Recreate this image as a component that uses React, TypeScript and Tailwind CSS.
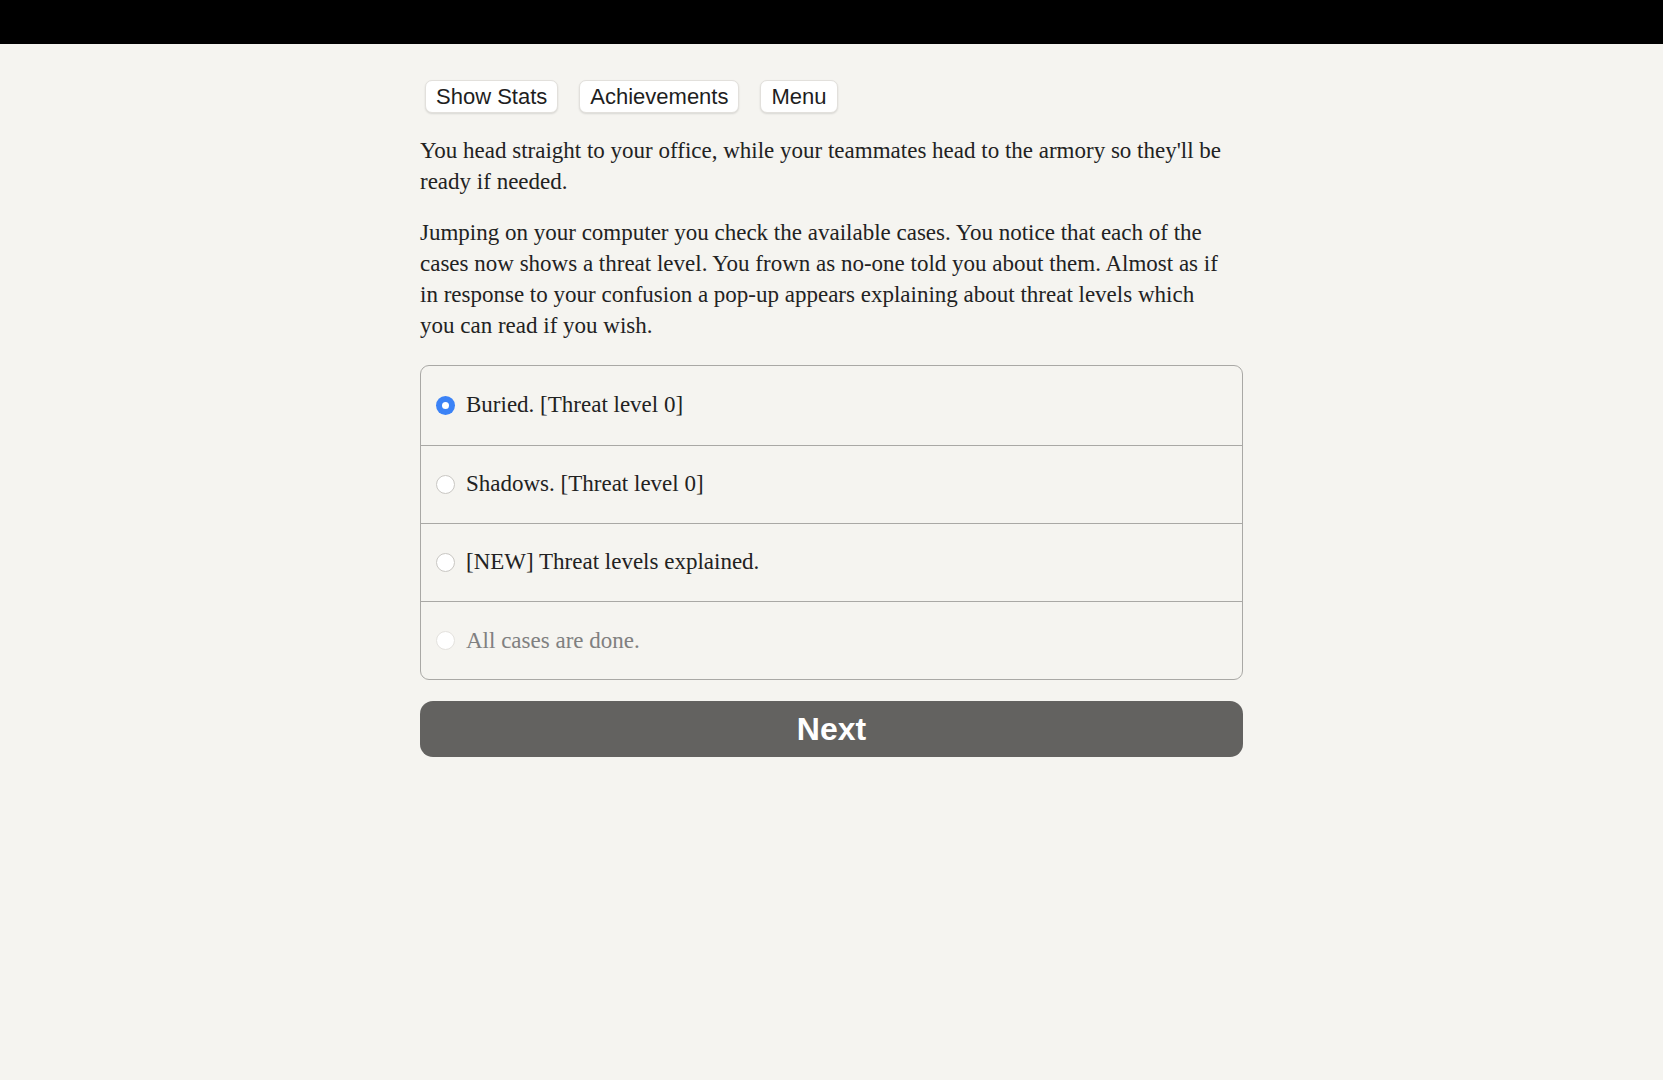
import { useState } from 'react';

const options = [
  { id: 'buried', label: 'Buried. [Threat level 0]', disabled: false },
  { id: 'shadows', label: 'Shadows. [Threat level 0]', disabled: false },
  { id: 'threat', label: '[NEW] Threat levels explained.', disabled: false },
  { id: 'done', label: 'All cases are done.', disabled: true },
];

function Radio({ checked, disabled }: { checked: boolean; disabled: boolean }) {
  if (checked) {
    return (
      <span className="w-[19px] h-[19px] rounded-full bg-[#3b82f6] flex items-center justify-center shrink-0">
        <span className="w-[7px] h-[7px] rounded-full bg-white" />
      </span>
    );
  }
  return (
    <span
      className={`w-[19px] h-[19px] rounded-full bg-white border shrink-0 ${
        disabled ? 'border-[#e4e2de] bg-[#f7f6f3]' : 'border-[#c9c7c3]'
      }`}
    />
  );
}

export default function App() {
  const [choice, setChoice] = useState('buried');

  return (
    <div className="min-h-[1080px] bg-[#f5f4f0] font-['Liberation_Serif',serif]">
      <div className="h-[44px] bg-black" />
      <div className="w-[823px] mx-auto">
        {/* top buttons */}
        <div className="flex gap-[21px] pl-[5px] pt-[36px] font-['Liberation_Sans',Arial,sans-serif]">
          {['Show Stats', 'Achievements', 'Menu'].map(b => (
            <button
              key={b}
              className="h-[33px] px-[10px] bg-white rounded-[7px] border border-[#e2e0dc] shadow-[0_1px_2px_rgba(0,0,0,0.12)] text-[22px] text-[#1e1e1e] leading-none"
            >
              {b}
            </button>
          ))}
        </div>

        {/* story text */}
        <div className="mt-[23px] text-[23px] leading-[30.7px] text-[#222]">
          <p>
            You head straight to your office, while your teammates head to the armory so they'll be
            <br />
            ready if needed.
          </p>
          <p className="mt-[21px]">
            Jumping on your computer you check the available cases. You notice that each of the
            <br />
            cases now shows a threat level. You frown as no-one told you about them. Almost as if
            <br />
            in response to your confusion a pop-up appears explaining about threat levels which
            <br />
            you can read if you wish.
          </p>
        </div>

        {/* choices */}
        <div className="mt-[24px] border border-[#a9a8a5] rounded-[9px] overflow-hidden">
          {options.map((o, i) => (
            <label
              key={o.id}
              onClick={() => !o.disabled && setChoice(o.id)}
              className={`h-[78.3px] flex items-center gap-[11px] pl-[15px] text-[23px] ${
                i > 0 ? 'border-t border-[#a9a8a5]' : ''
              } ${o.disabled ? 'text-[#808080]' : 'text-[#222] cursor-pointer'}`}
            >
              <Radio checked={choice === o.id} disabled={o.disabled} />
              <span>{o.label}</span>
            </label>
          ))}
        </div>

        {/* next */}
        <button className="mt-[21px] w-full h-[56px] rounded-[13px] bg-[#636260] text-white font-bold text-[32px] font-['Liberation_Sans',Arial,sans-serif]">
          Next
        </button>
      </div>
    </div>
  );
}
